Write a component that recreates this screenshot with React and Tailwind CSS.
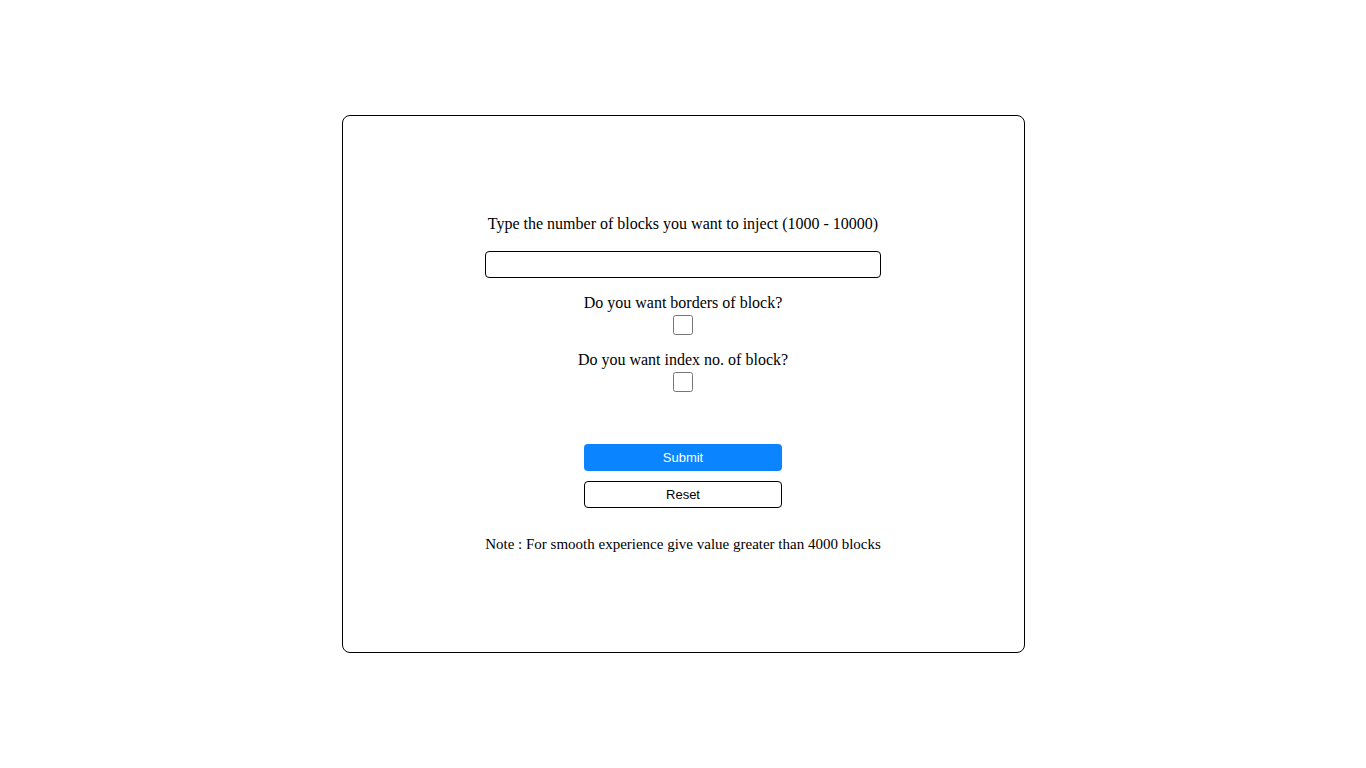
import React, { useState } from 'react';

const serif = "font-['Liberation_Serif','Times_New_Roman',serif]";
const sans = "font-['Liberation_Sans',Arial,sans-serif]";

export default function App() {
  const [count, setCount] = useState('');
  const [borders, setBorders] = useState(false);
  const [index, setIndex] = useState(false);

  const reset = () => {
    setCount('');
    setBorders(false);
    setIndex(false);
  };

  return (
    <div className="w-full h-[768px] bg-white flex items-center justify-center">
      <div className="w-[683px] h-[538px] border border-black rounded-lg flex flex-col items-center pt-[99px]">
        <form
          onSubmit={(e) => e.preventDefault()}
          className={`flex flex-col items-center text-black ${serif}`}
        >
          <label htmlFor="count" className="text-base leading-[18px]">
            Type the number of blocks you want to inject (1000 - 10000)
          </label>
          <input
            id="count"
            type="number"
            value={count}
            onChange={(e) => setCount(e.target.value)}
            className="mt-[18px] w-[396px] h-[27px] border border-black rounded px-2 outline-none"
          />

          <label htmlFor="borders" className="mt-[16px] text-base leading-[18px]">
            Do you want borders of block?
          </label>
          <input
            id="borders"
            type="checkbox"
            checked={borders}
            onChange={(e) => setBorders(e.target.checked)}
            className="mt-[3px] w-5 h-5 m-0"
          />

          <label htmlFor="index" className="mt-[16px] text-base leading-[18px]">
            Do you want index no. of block?
          </label>
          <input
            id="index"
            type="checkbox"
            checked={index}
            onChange={(e) => setIndex(e.target.checked)}
            className="mt-[3px] w-5 h-5 m-0"
          />

          <button
            type="submit"
            className={`mt-[52px] w-[198px] h-[27px] rounded bg-[#0a84ff] text-white text-[13px] ${sans}`}
          >
            Submit
          </button>
          <button
            type="button"
            onClick={reset}
            className={`mt-[10px] w-[198px] h-[27px] rounded border border-black bg-white text-black text-[13px] ${sans}`}
          >
            Reset
          </button>

          <p className="mt-[28px] text-[15px] leading-[17px]">
            Note : For smooth experience give value greater than 4000 blocks
          </p>
        </form>
      </div>
    </div>
  );
}
